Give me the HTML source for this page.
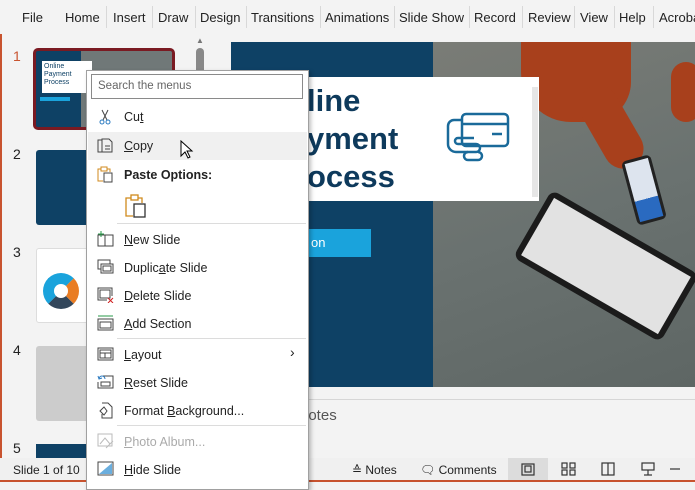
<!DOCTYPE html>
<html><head><style>
*{margin:0;padding:0;box-sizing:border-box}
body{width:695px;height:482px;overflow:hidden;background:#f3f3f3;font-family:"Liberation Sans",sans-serif;position:relative;color:#222}
.abs{position:absolute}
.tabs{left:0;top:0;width:695px;height:34px;background:#f3f3f3;font-size:13px}
.tabs span{position:absolute;top:10px}
.sep{position:absolute;top:6px;width:1px;height:22px;background:#d8d8d8}
.menu{left:86px;top:70px;width:223px;height:420px;background:#fff;border:1px solid #a0a0a0;box-shadow:2px 2px 4px rgba(0,0,0,.25);font-size:12.5px}
.mi{position:absolute;left:37px}
.ic{position:absolute;left:10px}
.hr{position:absolute;left:30px;right:2px;height:1px;background:#dcdcdc}
u{text-decoration:underline}
</style></head><body>
<div class="abs" style="left:0;top:0;width:2px;height:482px;background:#c8532f"></div>
<div class="abs tabs">
<span style="left:22px">File</span><span style="left:65px">Home</span><span style="left:113px">Insert</span><span style="left:158px">Draw</span><span style="left:200px">Design</span><span style="left:251px">Transitions</span><span style="left:325px">Animations</span><span style="left:399px">Slide Show</span><span style="left:474px">Record</span><span style="left:528px">Review</span><span style="left:580px">View</span><span style="left:619px">Help</span><span style="left:659px">Acrobat</span>
<i class="sep" style="left:106px"></i><i class="sep" style="left:152px"></i><i class="sep" style="left:195px"></i><i class="sep" style="left:246px"></i><i class="sep" style="left:320px"></i><i class="sep" style="left:394px"></i><i class="sep" style="left:469px"></i><i class="sep" style="left:522px"></i><i class="sep" style="left:574px"></i><i class="sep" style="left:614px"></i><i class="sep" style="left:653px"></i>
</div>
<div class="abs" style="left:13px;top:48px;font-size:14px;color:#c8532f">1</div>
<div class="abs" style="left:13px;top:146px;font-size:14px">2</div>
<div class="abs" style="left:13px;top:244px;font-size:14px">3</div>
<div class="abs" style="left:13px;top:342px;font-size:14px">4</div>
<div class="abs" style="left:13px;top:440px;font-size:14px">5</div>
<div class="abs" style="left:33px;top:48px;width:142px;height:82px;border:3px solid #7a1a22;border-radius:5px;background:#0e4165;overflow:hidden">
 <div class="abs" style="left:45px;top:0;width:95px;height:80px;background:#707878"></div>
 <div class="abs" style="left:6px;top:10px;width:50px;height:32px;background:#fff;font-size:7px;line-height:8px;padding:2px;color:#0e4165">Online<br>Payment<br>Process</div>
 <div class="abs" style="left:4px;top:46px;width:30px;height:4px;background:#1aa3dc"></div>
</div>
<div class="abs" style="left:36px;top:150px;width:60px;height:75px;background:#0e4165;border-radius:3px"></div>
<div class="abs" style="left:36px;top:248px;width:60px;height:75px;background:#fff;border:1px solid #ddd;border-radius:3px"><div class="abs" style="left:6px;top:24px;width:36px;height:36px;border-radius:50%;border:11px solid #1aa3dc;border-right-color:#e97d24;border-bottom-color:#33475b"></div></div>
<div class="abs" style="left:36px;top:346px;width:60px;height:75px;background:#ccc;border-radius:3px"></div>
<div class="abs" style="left:36px;top:444px;width:60px;height:14px;background:#0e4165"></div>
<div class="abs" style="left:196px;top:36px;width:10px;height:8px;color:#777;font-size:8px">▲</div>
<div class="abs" style="left:196px;top:48px;width:8px;height:30px;background:#888;border-radius:4px"></div>
<div class="abs" style="left:231px;top:42px;width:464px;height:345px;background:#0e4165;overflow:hidden">
 <div class="abs" style="left:202px;top:0;width:262px;height:345px;background:linear-gradient(160deg,#7a7c76,#6a7270 50%,#5e6664)"></div>
 <div class="abs" style="left:290px;top:-10px;width:110px;height:90px;background:#a8401c;border-radius:0 0 40px 50px"></div>
 <div class="abs" style="left:360px;top:40px;width:40px;height:90px;background:#a8401c;transform:rotate(-30deg);border-radius:20px"></div>
 <div class="abs" style="left:440px;top:20px;width:30px;height:60px;background:#a8401c;border-radius:15px"></div>
 <div class="abs" style="left:290px;top:185px;width:170px;height:78px;background:#1b1b1b;transform:rotate(30deg);border-radius:8px"><div style="margin:6px;height:66px;background:#e2e2e2"></div></div>
 <div class="abs" style="left:398px;top:115px;width:30px;height:66px;background:#222;transform:rotate(-15deg);border-radius:5px"><div style="margin:3px;height:60px;background:linear-gradient(#dde4ee 65%,#2a6ac0 65%)"></div></div>
 <div class="abs" style="left:30px;top:187px;width:110px;height:28px;background:#1aa3dc;color:#fff;font-size:13px;padding:6px 0 0 50px">on</div>
 <div class="abs" style="left:20px;top:35px;width:288px;height:124px;background:#fff"></div>
 <div class="abs" style="left:76px;top:40px;font-size:31px;font-weight:bold;line-height:38px;color:#0e3a5c;font-family:'Liberation Sans',sans-serif">line<br>yment<br>ocess</div>
 <svg class="abs" style="left:215px;top:70px" width="66" height="56" viewBox="0 0 66 56" fill="none" stroke="#1a6a9a" stroke-width="2.5"><rect x="16" y="2" width="46" height="32" rx="4"/><line x1="16" y1="12" x2="62" y2="12"/><line x1="46" y1="22" x2="56" y2="22"/><path d="M16 8 H8 a6 6 0 0 0 -6 6 V32 a8 8 0 0 0 8 8 H30 a4 4 0 0 0 0-8 H12 a3 3 0 0 1 0-6 H28"/><path d="M22 40 a4 4 0 0 0 0 8 H32 a4 4 0 0 0 0-8"/></svg>
 <div class="abs" style="left:301px;top:45px;width:6px;height:110px;background:#e6e6e6"></div>
</div>
<div class="abs" style="left:220px;top:399px;width:475px;height:1px;background:#d6d6d6"></div>
<div class="abs" style="left:300px;top:407px;font-size:15px;color:#555">notes</div>
<div class="abs" style="left:0;top:458px;width:695px;height:24px;background:#f0f0f0;border-bottom:2px solid #c8532f;font-size:12px">
 <span class="abs" style="left:13px;top:5px">Slide 1 of 10</span>
 <span class="abs" style="left:352px;top:5px">≙ Notes</span>
 <span class="abs" style="left:420px;top:5px">🗨 Comments</span>
 <div class="abs" style="left:508px;top:0;width:40px;height:22px;background:#dcdcdc"></div>
 <svg class="abs" style="left:520px;top:4px" width="160" height="15" fill="none" stroke="#333" stroke-width="1.2"><rect x="2" y="2" width="12" height="11"/><rect x="5" y="4" width="6" height="6"/><rect x="42" y="1" width="5" height="5"/><rect x="50" y="1" width="5" height="5"/><rect x="42" y="8" width="5" height="5"/><rect x="50" y="8" width="5" height="5"/><rect x="82" y="1" width="12" height="12"/><line x1="88" y1="1" x2="88" y2="13"/><rect x="122" y="1" width="12" height="7"/><line x1="128" y1="8" x2="128" y2="13"/><line x1="124" y1="13" x2="132" y2="13"/><line x1="150" y1="7" x2="160" y2="7"/></svg>
</div>
<div class="abs menu">
 <div class="abs" style="left:4px;top:3px;width:212px;height:25px;border:1px solid #8a8a8a;font-size:11.5px;color:#666;padding:5px 6px">Search the menus</div>
 <svg class="ic" style="top:38px" width="16" height="16" fill="none" stroke="#444"><path d="M5 1 L10 11 M11 1 L6 11"/><circle cx="5" cy="13" r="2" stroke="#2a7ac0"/><circle cx="11" cy="13" r="2" stroke="#2a7ac0"/></svg>
 <div class="mi" style="top:39px">Cu<u>t</u></div>
 <div class="abs" style="left:1px;top:61px;width:219px;height:28px;background:#f0f0f0"></div>
 <svg class="ic" style="top:66px" width="17" height="17" fill="none" stroke="#444"><path d="M5 3 H1 V15 H5"/><path d="M5 2 H12 L15 5 V15 H5 Z"/><line x1="8" y1="9" x2="13" y2="9"/><line x1="8" y1="12" x2="13" y2="12"/></svg>
 <div class="mi" style="top:68px"><u>C</u>opy</div>
 <svg class="abs" style="left:93px;top:69px" width="14" height="20"><path d="M1 1 V16 L5 12 L8 18 L10 17 L7 11 H12 Z" fill="#fff" stroke="#000"/></svg>
 <svg class="ic" style="top:95px" width="16" height="17" fill="none" stroke="#d08a1c"><path d="M10 3 H13 V6"/><path d="M4 3 H1 V15 H6"/><rect x="4" y="1" width="6" height="4"/><rect x="7" y="7" width="8" height="9" stroke="#444"/></svg>
 <div class="mi" style="top:97px;font-weight:bold">Paste Options:</div>
 <svg class="abs" style="left:38px;top:123px" width="22" height="24" fill="none" stroke="#d08a1c" stroke-width="1.3"><path d="M13 4 H17 V9"/><path d="M6 4 H1 V22 H8"/><rect x="6" y="1" width="7" height="5"/><rect x="9" y="10" width="11" height="13" stroke="#333"/></svg>
 <div class="hr" style="top:152px"></div>
 <svg class="ic" style="top:160px" width="17" height="16" fill="none" stroke="#444"><rect x="1" y="4" width="15" height="11"/><line x1="8" y1="4" x2="8" y2="15"/><path d="M4 0 V6 M1 3 H7" stroke="#2a9a4a"/></svg>
 <div class="mi" style="top:162px"><u>N</u>ew Slide</div>
 <svg class="ic" style="top:188px" width="17" height="16" fill="none" stroke="#444"><rect x="1" y="1" width="12" height="9"/><rect x="4" y="5" width="12" height="9" fill="#fff"/><rect x="6" y="7" width="8" height="5"/></svg>
 <div class="mi" style="top:190px">Duplic<u>a</u>te Slide</div>
 <svg class="ic" style="top:216px" width="17" height="16" fill="none" stroke="#444"><path d="M10 13 H1 V1 H15 V9"/><rect x="3" y="3" width="10" height="8"/><path d="M11 11 L16 16 M16 11 L11 16" stroke="#d02020"/></svg>
 <div class="mi" style="top:218px"><u>D</u>elete Slide</div>
 <svg class="ic" style="top:244px" width="17" height="16" fill="none" stroke="#444"><line x1="1" y1="1" x2="16" y2="1" stroke="#2a9a4a"/><rect x="1" y="4" width="15" height="11"/><rect x="3" y="7" width="11" height="6"/></svg>
 <div class="mi" style="top:246px"><u>A</u>dd Section</div>
 <div class="hr" style="top:267px"></div>
 <svg class="ic" style="top:275px" width="17" height="16" fill="none" stroke="#444"><rect x="1" y="2" width="15" height="12"/><rect x="3" y="4" width="11" height="8"/><line x1="3" y1="7" x2="14" y2="7"/><line x1="8" y1="7" x2="8" y2="12"/></svg>
 <div class="mi" style="top:277px"><u>L</u>ayout</div>
 <div class="abs" style="left:203px;top:273px;font-size:14px">›</div>
 <svg class="ic" style="top:303px" width="17" height="16" fill="none" stroke="#444"><path d="M6 2 H16 V14 H1 V8"/><path d="M2 5 A3 3 0 0 1 8 5" stroke="#2a7ac0"/><path d="M1 2 L2 5 L5 4" stroke="#2a7ac0"/><rect x="4" y="8" width="9" height="4"/></svg>
 <div class="mi" style="top:305px"><u>R</u>eset Slide</div>
 <svg class="ic" style="top:331px" width="17" height="17" fill="none" stroke="#444"><path d="M5 1 H11 L15 5 V16 H5 V12"/><path d="M3 9 L7 5 L10 9 L7 13 Z"/></svg>
 <div class="mi" style="top:333px">Format <u>B</u>ackground...</div>
 <div class="hr" style="top:354px"></div>
 <svg class="ic" style="top:362px" width="17" height="16" fill="none" stroke="#bbb"><rect x="1" y="1" width="14" height="12"/><path d="M3 11 L8 5 L13 11"/><path d="M9 15 L16 8"/></svg>
 <div class="mi" style="top:364px;color:#aaa"><u>P</u>hoto Album...</div>
 <svg class="ic" style="top:390px" width="17" height="16"><rect x="1" y="1" width="15" height="13" fill="none" stroke="#444"/><path d="M2 13 L15 2 V13 Z" fill="#6aaede"/></svg>
 <div class="mi" style="top:392px"><u>H</u>ide Slide</div>
</div>
</body></html>
